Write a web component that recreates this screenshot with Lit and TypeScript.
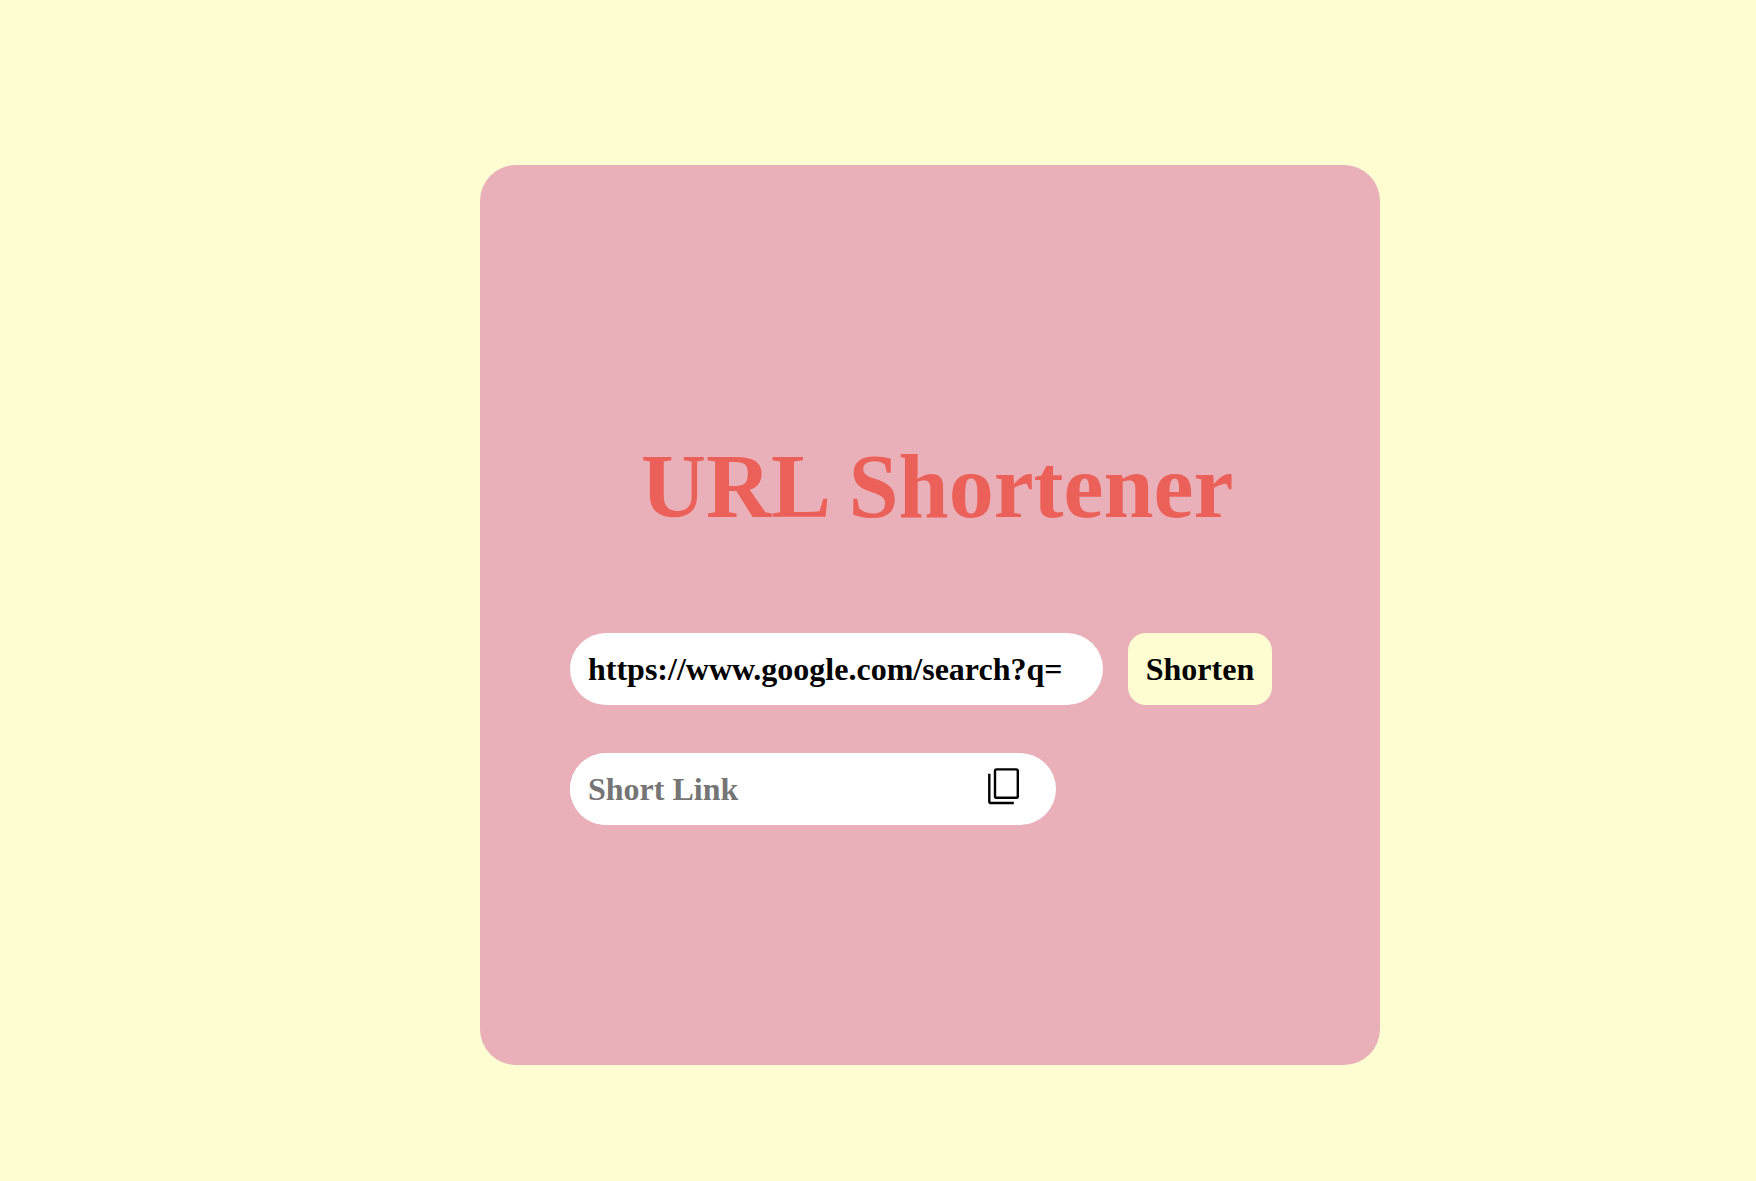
import { LitElement, html, css } from "lit";
import { customElement, state } from "lit/decorators.js";

@customElement("app-root")
export class AppRoot extends LitElement {
  static styles = css`
    :host {
      display: block;
      font-family: "Liberation Serif", "Times New Roman", serif;
      font-weight: 700;
    }
    *,
    *::before,
    *::after {
      box-sizing: border-box;
    }
    .page {
      display: flex;
      align-items: center;
      justify-content: center;
      min-height: 100vh;
      padding: 49px 0 0 104px;
      background: #fdfdd1;
    }
    .card {
      width: 100%;
      max-width: 900px;
      aspect-ratio: 1;
      padding: 270px 108px 0 90px;
      border-radius: 36px;
      background: #eab0b9;
    }
    .title {
      margin: 0 0 94px;
      padding-left: 71px;
      font-size: 90px;
      line-height: 104px;
      color: #eb615a;
      white-space: nowrap;
    }
    .form {
      display: flex;
      gap: 25px;
      margin-bottom: 48px;
    }
    .field,
    .shorten {
      height: 72px;
      border: 0;
      font: inherit;
      font-size: 32px;
      color: #000;
    }
    .field {
      flex: 1;
      min-width: 0;
      padding: 0 36px 0 18px;
      border-radius: 36px;
      outline: none;
      background: #fff;
    }
    .field::placeholder {
      color: #757575;
      opacity: 1;
    }
    .shorten {
      flex: none;
      width: 144px;
      padding: 0;
      border-radius: 18px;
      background: #fdfdd1;
      cursor: pointer;
    }
    .result {
      display: flex;
      align-items: center;
      max-width: 486px;
      padding-right: 34px;
      border-radius: 36px;
      background: #fff;
    }
    .copy {
      display: flex;
      flex: none;
      padding: 0 0 6px;
      border: 0;
      background: none;
      color: #000;
      cursor: pointer;
    }
  `;

  @state() private url = "https://www.google.com/search?q=";
  @state() private shortLink = "";

  private onInput(e: Event) {
    this.url = (e.target as HTMLInputElement).value;
  }

  private onSubmit(e: Event) {
    e.preventDefault();
    let hash = 0;
    for (const ch of this.url) hash = (hash * 31 + ch.charCodeAt(0)) >>> 0;
    this.shortLink = this.url ? `${location.host}/${hash.toString(36)}` : "";
  }

  private onCopy() {
    if (this.shortLink) navigator.clipboard?.writeText(this.shortLink);
  }

  render() {
    return html`
      <main class="page">
        <section class="card">
          <h1 class="title">URL Shortener</h1>
          <form class="form" @submit=${this.onSubmit}>
            <input
              class="field"
              type="text"
              aria-label="URL"
              spellcheck="false"
              .value=${this.url}
              @input=${this.onInput}
            />
            <button class="shorten" type="submit">Shorten</button>
          </form>
          <div class="result">
            <input
              class="field"
              type="text"
              aria-label="Short link"
              placeholder="Short Link"
              readonly
              .value=${this.shortLink}
            />
            <button class="copy" type="button" aria-label="Copy" @click=${this.onCopy}>
              <svg width="36" height="38" viewBox="0 0 36 38" fill="none" stroke="currentColor" stroke-width="2.4" aria-hidden="true">
                <rect x="9" y="2.4" width="22.8" height="28.4" rx="1.6" />
                <path d="M3.3 6.8V34.4Q3.3 36 4.9 36H27.8" />
              </svg>
            </button>
          </div>
        </section>
      </main>
    `;
  }
}
